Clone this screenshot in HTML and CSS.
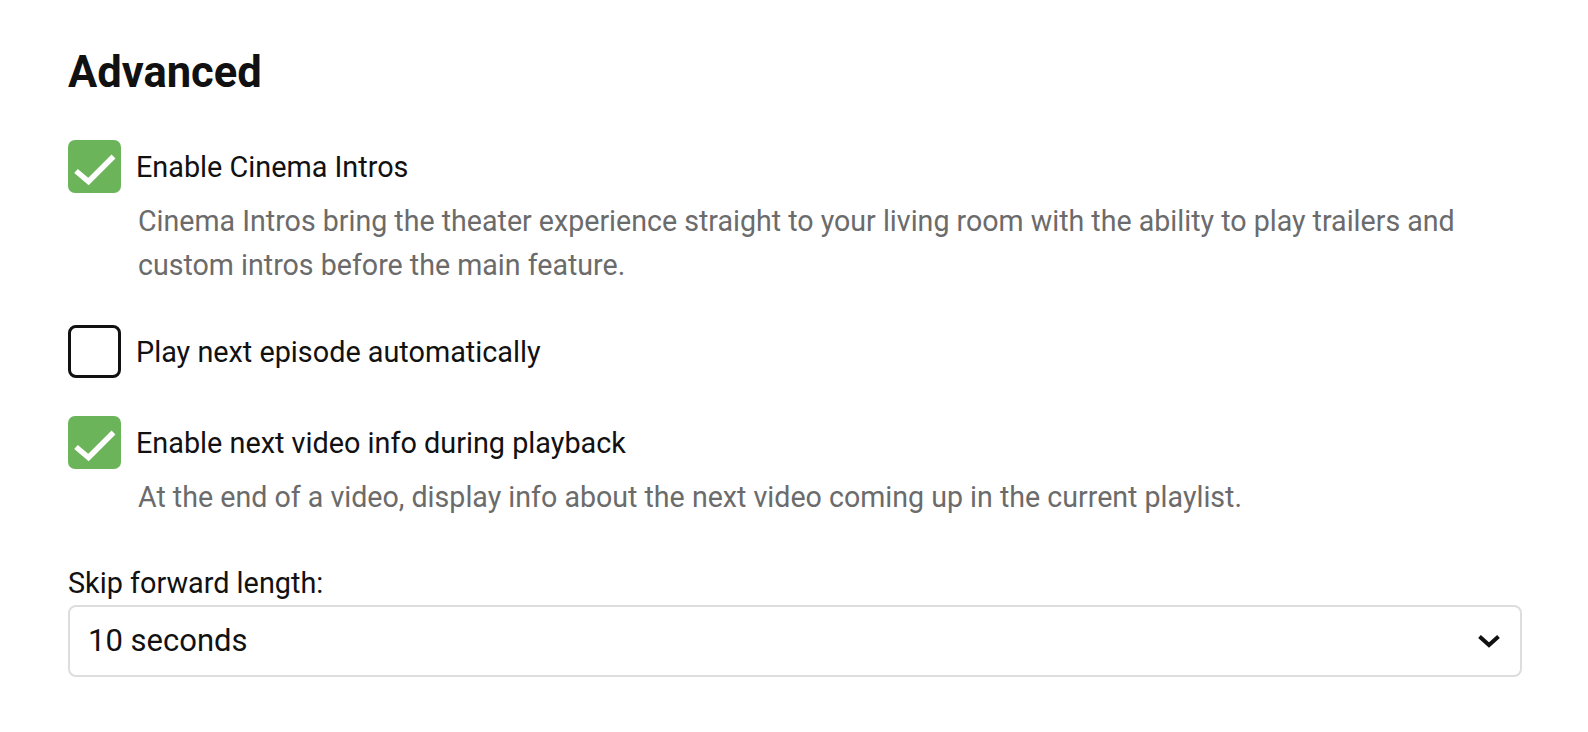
FILE: index.html
```html
<!DOCTYPE html>
<html lang="en">
<head>
<meta charset="utf-8">
<title>Advanced</title>
<link rel="stylesheet" href="styles.css">
</head>
<body>
<main class="page">
  <h1 class="title">Advanced</h1>

  <div class="option">
    <div class="row">
      <span class="box checked">
        <svg viewBox="0 0 52 52" width="52" height="52"><path d="M7 30 L19.5 40.5 L44.5 15.5" fill="none" stroke="#fff" stroke-width="5.5"/></svg>
      </span>
      <span class="label">Enable Cinema Intros</span>
    </div>
    <p class="desc">Cinema Intros bring the theater experience straight to your living room with the ability to play trailers and custom intros before the main feature.</p>
  </div>

  <div class="option">
    <div class="row">
      <span class="box"></span>
      <span class="label">Play next episode automatically</span>
    </div>
  </div>

  <div class="option">
    <div class="row">
      <span class="box checked">
        <svg viewBox="0 0 52 52" width="52" height="52"><path d="M7 30 L19.5 40.5 L44.5 15.5" fill="none" stroke="#fff" stroke-width="5.5"/></svg>
      </span>
      <span class="label">Enable next video info during playback</span>
    </div>
    <p class="desc">At the end of a video, display info about the next video coming up in the current playlist.</p>
  </div>

  <div class="field">
    <div class="field-label">Skip forward length:</div>
    <div class="select">
      <span class="select-value">10 seconds</span>
      <svg class="chevron" viewBox="0 0 24 14" width="24" height="14"><path d="M2.5 2.5 L12 11 L21.5 2.5" fill="none" stroke="#111" stroke-width="4"/></svg>
    </div>
  </div>
</main>
</body>
</html>
```

FILE: styles.css
```css
html, body {
  margin: 0;
  padding: 0;
  background: #ffffff;
}

body {
  font-family: Roboto, "Liberation Sans", Arial, sans-serif;
  color: #111111;
}

.page {
  padding: 48px 66px 0 68px;
}

.title {
  margin: 0;
  font-size: 43.5px;
  line-height: 50px;
  font-weight: 700;
  color: #111111;
}

.option {
  margin-top: 38px;
}

.title + .option {
  margin-top: 42px;
}

.row {
  display: flex;
  align-items: center;
}

.box {
  box-sizing: border-box;
  width: 53px;
  height: 53px;
  flex: 0 0 53px;
  border: 3px solid #111111;
  border-radius: 8px;
  display: flex;
  align-items: center;
  justify-content: center;
}

.box.checked {
  border: none;
  background: #6bb45a;
  border-radius: 7px;
}

.label {
  margin-left: 15px;
  font-size: 28.8px;
  line-height: 34px;
  color: #111111;
}

.desc {
  margin: 7px 0 0 70px;
  font-size: 28.6px;
  line-height: 43.5px;
  color: #6b6b6b;
}

.option + .field {
  margin-top: 46px;
}

.field-label {
  font-size: 28.8px;
  line-height: 34px;
  color: #111111;
}

.select {
  box-sizing: border-box;
  margin-top: 5px;
  height: 72px;
  border: 2px solid #dddddd;
  border-radius: 8px;
  display: flex;
  align-items: center;
  justify-content: space-between;
  padding: 0 19px 0 18px;
}

.select-value {
  font-size: 31px;
  color: #111111;
}

.chevron {
  display: block;
}
```
